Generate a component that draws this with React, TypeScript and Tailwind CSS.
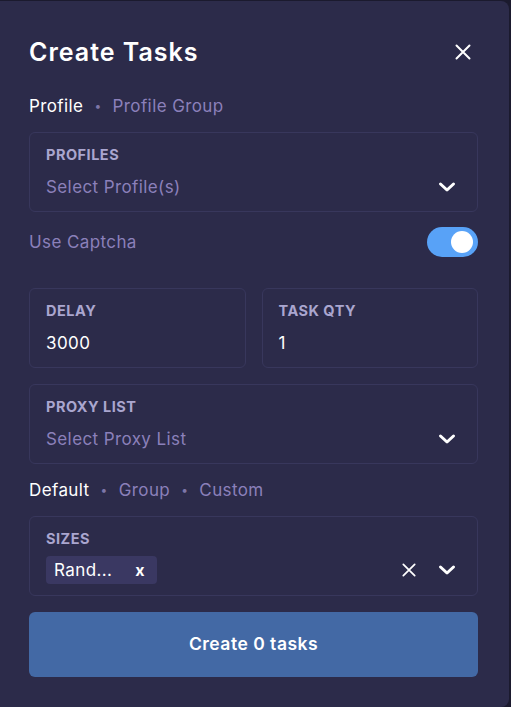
import React from "react";

const Chevron = () => (
  <svg width="18" height="12" viewBox="0 0 18 12" fill="none">
    <path d="M2.5 3 L9 9 L15.5 3" stroke="white" strokeWidth="3" strokeLinecap="round" strokeLinejoin="round" />
  </svg>
);

const Cross = ({ size = 16, sw = 2 }: { size?: number; sw?: number }) => (
  <svg width={size} height={size} viewBox="0 0 16 16" fill="none">
    <path d="M1.5 1.5 L14.5 14.5 M14.5 1.5 L1.5 14.5" stroke="white" strokeWidth={sw} strokeLinecap="round" />
  </svg>
);

const Field = ({ label, children }: { label: string; children: React.ReactNode }) => (
  <div className="h-[80px] rounded-md border border-[#38375c] px-4 pt-[13px]">
    <div className="text-[14.5px] font-bold leading-[18px] tracking-[0.5px] text-[#aaa6cf]">{label}</div>
    {children}
  </div>
);

export default function App() {
  return (
    <div
      className="h-[707px] w-[511px] overflow-hidden bg-[#1b1a2e] pt-px"
      style={{ fontFamily: "Inter, 'Noto Sans', sans-serif" }}
    >
      <div className="flex h-[706px] w-[509px] flex-col rounded-r-lg bg-[#2c2b4a] pl-[29px] pr-[31px] pt-[35px] text-[17px] tracking-[0.4px]">
        <div className="flex h-[32px] items-center justify-between">
          <h1 className="text-[25px] font-semibold leading-[32px] tracking-[1px] text-white">Create Tasks</h1>
          <div className="mr-[7px]">
            <Cross size={16} sw={2} />
          </div>
        </div>

        <div className="mt-[26px] flex h-[24px] items-center leading-[24px]">
          <span className="text-white">Profile</span>
          <span className="mx-[11px] text-[12px] text-[#7d76a8]">•</span>
          <span className="text-[#8b80ba]">Profile Group</span>
        </div>

        <div className="mt-[14px]">
          <Field label="PROFILES">
            <div className="mt-[11px] flex items-center justify-between">
              <span className="leading-[24px] text-[#8b80ba]">Select Profile(s)</span>
              <span className="mr-[5px]"><Chevron /></span>
            </div>
          </Field>
        </div>

        <div className="mt-[15px] flex items-center justify-between">
          <span className="leading-[30px] text-[#8b80ba]">Use Captcha</span>
          <div className="flex h-[30px] w-[51px] items-center justify-end rounded-full bg-[#58a2f7] pr-[5px]">
            <div className="h-[22px] w-[22px] rounded-full bg-white" />
          </div>
        </div>

        <div className="mt-[31px] grid grid-cols-2 gap-4">
          <Field label="DELAY">
            <div className="mt-[11px] leading-[24px] text-white">3000</div>
          </Field>
          <Field label="TASK QTY">
            <div className="mt-[11px] leading-[24px] text-white">1</div>
          </Field>
        </div>

        <div className="mt-4">
          <Field label="PROXY LIST">
            <div className="mt-[11px] flex items-center justify-between">
              <span className="leading-[24px] text-[#8b80ba]">Select Proxy List</span>
              <span className="mr-[5px]"><Chevron /></span>
            </div>
          </Field>
        </div>

        <div className="mt-[14px] flex h-[24px] items-center leading-[24px]">
          <span className="text-white">Default</span>
          <span className="mx-[11px] text-[12px] text-[#7d76a8]">•</span>
          <span className="text-[#8b80ba]">Group</span>
          <span className="mx-[11px] text-[12px] text-[#7d76a8]">•</span>
          <span className="text-[#8b80ba]">Custom</span>
        </div>

        <div className="mt-[14px]">
          <Field label="SIZES">
            <div className="mt-[8px] flex items-center justify-between">
              <div className="flex h-[28px] w-[111px] items-center rounded bg-[#3a3862] pl-[8px]">
                <span className="leading-[24px] text-white">Rand...</span>
                <span className="ml-[23px] text-[16px] font-bold leading-none text-white">x</span>
              </div>
              <div className="mr-[5px] flex items-center gap-[22px]">
                <Cross size={14} sw={2} />
                <Chevron />
              </div>
            </div>
          </Field>
        </div>

        <button className="mt-4 flex h-[65px] w-full items-center justify-center rounded-md bg-[#4369a5] text-[17.5px] font-semibold tracking-[0.5px] text-white">
          Create 0 tasks
        </button>
      </div>
    </div>
  );
}
